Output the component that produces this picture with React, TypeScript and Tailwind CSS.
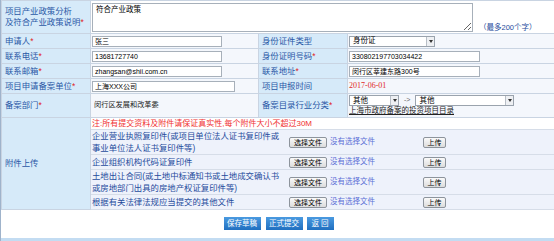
import React from 'react';

const lbl = "bg-[#d6eaf9] text-[#2a58a6] pl-[3px] border border-[#c9d4e2] align-middle leading-[11px]";
const val = "bg-[#f4f7fc] border border-[#c9d4e2] pl-[1px] align-middle";

function Star() {
  return <span className="text-[#e02020]">*</span>;
}

function Box({ w, children }: { w: string; children: React.ReactNode }) {
  return (
    <div className={`${w} h-[11px] bg-white border border-[#a7b0ba] text-[7px] leading-[9px] pl-[2px] text-black overflow-hidden whitespace-nowrap`}>
      {children}
    </div>
  );
}

function Sel({ w, text }: { w: string; text: string }) {
  return (
    <div className={`${w} h-[11px] bg-white border border-[#9aa3ad] flex items-center text-[7.5px] text-black`}>
      <span className="flex-1 pl-[3px] leading-none">{text}</span>
      <span className="w-[8px] h-[9px] border-l border-[#b8bec6] bg-[#eef0f3] flex items-center justify-center">
        <span className="block w-0 h-0 border-l-[2px] border-r-[2px] border-t-[3px] border-l-transparent border-r-transparent border-t-[#333]" />
      </span>
    </div>
  );
}

function GrayBtn({ w, label }: { w: string; label: string }) {
  return (
    <div className={`${w} h-[11px] rounded-[2px] border border-[#8d949c] bg-gradient-to-b from-[#fafafa] to-[#dcdcdc] text-[7px] leading-[9px] text-center text-black`}>
      {label}
    </div>
  );
}

function FileRow({ h, lines }: { h: string; lines: string[] }) {
  return (
    <tr className={h}>
      <td colSpan={3} className="bg-[#eef2fb] border border-[#d6dde8] p-0 align-middle">
        <div className="flex items-center">
          <div className="w-[198px] pl-[1px] text-[#1e4b9c] leading-[12px] whitespace-nowrap">
            {lines.map((l, i) => <div key={i}>{l}</div>)}
          </div>
          <GrayBtn w="w-[38px]" label="选择文件" />
          <span className="ml-[3px] w-[93px] text-[7.5px] text-[#5b6fd6]">没有选择文件</span>
          <GrayBtn w="w-[23px]" label="上传" />
        </div>
      </td>
    </tr>
  );
}

export default function App() {
  return (
    <div className="w-[554px] h-[241px] bg-white font-['Liberation_Sans','Noto_Sans_CJK_SC',sans-serif] text-[8.4px] border-l border-[#9fb3cb] overflow-hidden flex flex-col">
      <table className="w-[554px] table-fixed border-collapse">
        <colgroup>
          <col className="w-[89px]" />
          <col className="w-[168px]" />
          <col className="w-[89px]" />
          <col className="w-[207px]" />
        </colgroup>
        <tbody>
          <tr className="h-[33px]">
            <td className={lbl}>
              项目产业政策分析<br />及符合产业政策说明<Star />
            </td>
            <td colSpan={3} className="bg-white border border-[#c9d4e2] p-0 align-top">
              <div className="flex items-end pt-[2px]">
                <textarea
                  defaultValue="符合产业政策"
                  className="w-[381px] h-[29px] ml-[1px] border border-[#a7b0ba] text-[7.5px] leading-[9px] px-[3px] py-[1px] text-black resize"
                />
                <span className="ml-[6px] text-[7.5px] text-[#1e4b9c] leading-[9px]">（最多200个字）</span>
              </div>
            </td>
          </tr>
          <tr className="h-[15px]">
            <td className={lbl}>申请人<Star /></td>
            <td className={val}><Box w="w-[130px]">张三</Box></td>
            <td className={lbl}>身份证件类型</td>
            <td className={val}><Sel w="w-[86px]" text="身份证" /></td>
          </tr>
          <tr className="h-[15px]">
            <td className={lbl}>联系电话<Star /></td>
            <td className={val}><Box w="w-[130px]">13681727740</Box></td>
            <td className={lbl}>身份证明号码<Star /></td>
            <td className={val}><Box w="w-[131px]">330802197703034422</Box></td>
          </tr>
          <tr className="h-[15px]">
            <td className={lbl}>联系邮箱<Star /></td>
            <td className={val}><Box w="w-[130px]">zhangsan@shii.com.cn</Box></td>
            <td className={lbl}>联系地址<Star /></td>
            <td className={val}><Box w="w-[131px]">闵行区莘建东路300号</Box></td>
          </tr>
          <tr className="h-[15px]">
            <td className={lbl}>项目申请备案单位<Star /></td>
            <td className={val}><Box w="w-[143px]">上海XXX公司</Box></td>
            <td className={lbl}>项目申报时间</td>
            <td className={`${val} text-[#e02828] font-['Liberation_Serif','Noto_Sans_CJK_SC',serif] text-[8px]`}>2017-06-01</td>
          </tr>
          <tr className="h-[24px]">
            <td className={lbl}>备案部门<Star /></td>
            <td className={`${val} pl-[3px] text-[7.2px] text-[#222]`}>闵行区发展和改革委</td>
            <td className={lbl}>备案目录行业分类<Star /></td>
            <td className={val}>
              <div className="flex items-center">
                <Sel w="w-[50px]" text="其他" />
                <span className="mx-[5px] text-[7px] text-[#666]">-&gt;</span>
                <Sel w="w-[99px]" text="其他" />
              </div>
              <div className="text-[7.5px] leading-[10px] text-[#222] underline">上海市政府备案的投资项目目录</div>
            </td>
          </tr>
          <tr className="h-[12px]">
            <td rowSpan={5} className={lbl}>附件上传</td>
            <td colSpan={3} className="bg-white border border-[#d6dde8] pl-[1px] text-[#f03030] leading-[11px] text-[8px]">
              注:所有提交资料及附件请保证真实性,每个附件大小不超过30M
            </td>
          </tr>
          <FileRow h="h-[25px]" lines={["企业营业执照复印件(或项目单位法人证书复印件或", "事业单位法人证书复印件等)"]} />
          <FileRow h="h-[15px]" lines={["企业组织机构代码证复印件"]} />
          <FileRow h="h-[25px]" lines={["土地出让合同(或土地中标通知书或土地成交确认书", "或房地部门出具的房地产权证复印件等)"]} />
          <FileRow h="h-[15px]" lines={["根据有关法律法规应当提交的其他文件"]} />
        </tbody>
      </table>
      <div className="flex justify-center gap-[4px] pt-[7px] pl-[2px]">
        {["保存草稿", "正式提交", "返 回"].map((t, i) => (
          <div
            key={t}
            className={`${i === 2 ? "w-[27px]" : "w-[37px]"} h-[13px] bg-gradient-to-b from-[#4a9ae0] to-[#1f6fc0] text-white text-[7.5px] leading-[13px] text-center ${i === 1 ? "ml-[1px]" : ""}`}
          >
            {t}
          </div>
        ))}
      </div>
      <div className="mt-auto h-[3px] bg-[#c3dcf2]" />
    </div>
  );
}
